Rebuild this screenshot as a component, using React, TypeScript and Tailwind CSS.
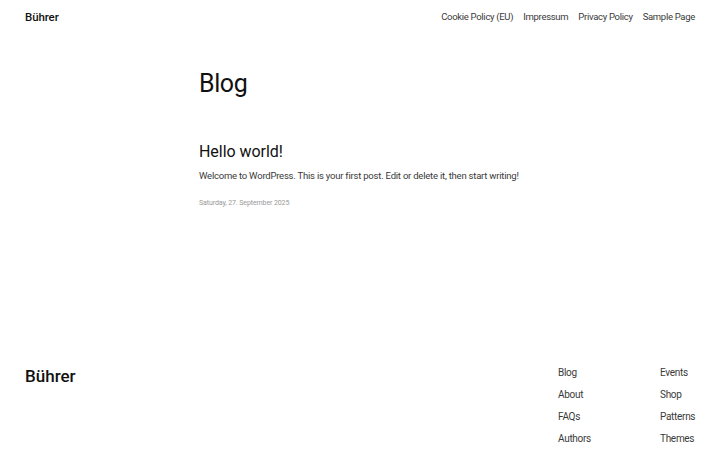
import React from "react";

const navLinks = ["Cookie Policy (EU)", "Impressum", "Privacy Policy", "Sample Page"];
const footerCol1 = ["Blog", "About", "FAQs", "Authors"];
const footerCol2 = ["Events", "Shop", "Patterns", "Themes"];

export default function App() {
  return (
    <div className="w-[720px] h-[450px] bg-white text-[#111] flex flex-col font-['Roboto',sans-serif] overflow-hidden">
      {/* Header */}
      <header className="h-[35px] px-[25px] flex items-center justify-between">
        <div className="text-[11.5px] font-medium tracking-[-0.1px]">Bührer</div>
        <nav className="flex gap-[10px] text-[9.5px] text-[#3a3a3a] tracking-[-0.3px]">
          {navLinks.map((l) => (
            <span key={l}>{l}</span>
          ))}
        </nav>
      </header>

      {/* Main */}
      <main className="flex-1">
        <div className="w-[322px] mx-auto pt-[33px]">
          <h1 className="text-[25px] leading-[32px] font-normal tracking-[-0.4px]">Blog</h1>
          <h2 className="mt-[41px] text-[16px] leading-[22px] tracking-[-0.05px]">Hello world!</h2>
          <p className="mt-[6px] text-[9.5px] leading-[14px] text-[#3a3a3a] tracking-[-0.22px] whitespace-nowrap">
            Welcome to WordPress. This is your first post. Edit or delete it, then start writing!
          </p>
          <div className="mt-[15px] text-[7px] leading-[10px] text-[#999] tracking-[-0.1px]">Saturday, 27. September 2025</div>
        </div>
      </main>

      {/* Footer */}
      <footer className="h-[100px] px-[25px] flex justify-between">
        <div className="text-[17px] font-medium tracking-[0px] pt-[14px]">Bührer</div>
        <div className="flex gap-[48px] pt-[16px]">
          <div className="flex flex-col gap-[8px] w-[54px] text-[10px] leading-[14px] text-[#3a3a3a] tracking-[-0.3px]">
            {footerCol1.map((l) => (
              <span key={l}>{l}</span>
            ))}
          </div>
          <div className="flex flex-col gap-[8px] w-[35px] text-[10px] leading-[14px] text-[#3a3a3a] tracking-[-0.3px]">
            {footerCol2.map((l) => (
              <span key={l}>{l}</span>
            ))}
          </div>
        </div>
      </footer>
    </div>
  );
}
